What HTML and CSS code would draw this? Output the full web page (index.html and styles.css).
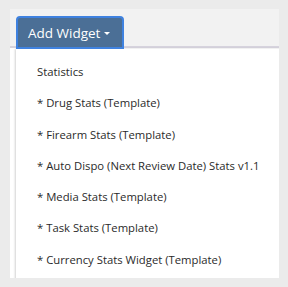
FILE: index.html
```html
<!DOCTYPE html>
<html>
<head>
<meta charset="utf-8">
<link rel="stylesheet" href="styles.css">
</head>
<body>
<div class="panel">
  <div class="header">
    <div class="dropdown">
      <button class="btn">Add Widget <span class="caret"></span></button>
      <ul class="menu">
        <li>Statistics</li>
        <li>* Drug Stats (Template)</li>
        <li>* Firearm Stats (Template)</li>
        <li>* Auto Dispo (Next Review Date) Stats v1.1</li>
        <li>* Media Stats (Template)</li>
        <li>* Task Stats (Template)</li>
        <li>* Currency Stats Widget (Template)</li>
      </ul>
    </div>
  </div>
  <div class="body"></div>
</div>
</body>
</html>
```
FILE: styles.css
```css
html, body { margin: 0; padding: 0; }
body {
  background: #ebebeb;
  width: 288px;
  height: 287px;
  padding: 9px 0 0 10px;
  box-sizing: border-box;
  font-family: "Open Sans", "Liberation Sans", sans-serif;
  overflow: hidden;
}
.panel {
  width: 269px;
  height: 269px;
  background: #f2f2f2;
  position: relative;
  overflow: hidden;
}
.header {
  border-bottom: 2px solid #d6d3dd;
  padding: 7px 0 0 6px;
  box-sizing: border-box;
  height: 39px;
}
.dropdown { position: relative; }
.btn {
  display: flex;
  align-items: center;
  gap: 4px;
  width: 108px;
  height: 33px;
  box-sizing: border-box;
  background: #4b6f96;
  color: #fff;
  border: 2px solid #3f82e0;
  border-radius: 4px 4px 0 0;
  font-family: "Open Sans", "Liberation Sans", sans-serif;
  font-size: 13.5px;
  padding: 0 0 0 10px;
  margin: 0;
  position: relative;
  z-index: 2;
}
.caret {
  width: 0; height: 0;
  border-left: 3.5px solid transparent;
  border-right: 3.5px solid transparent;
  border-top: 3.5px solid #fff;
  margin-top: 2px;
}
.menu {
  position: absolute;
  left: 0;
  top: 33px;
  width: 300px;
  height: 260px;
  margin: 0;
  padding: 7px 0 0 0;
  list-style: none;
  background: #fff;
  box-shadow: -1px 0 2px rgba(0,0,0,0.18);
  z-index: 1;
  box-sizing: border-box;
}
.menu li {
  font-size: 11.3px;
  color: #2a2a2a;
  padding: 0 0 0 21px;
  height: 31.3px;
  line-height: 31.3px;
  white-space: nowrap;
}
.body { background: #fff; height: 230px; }
```
